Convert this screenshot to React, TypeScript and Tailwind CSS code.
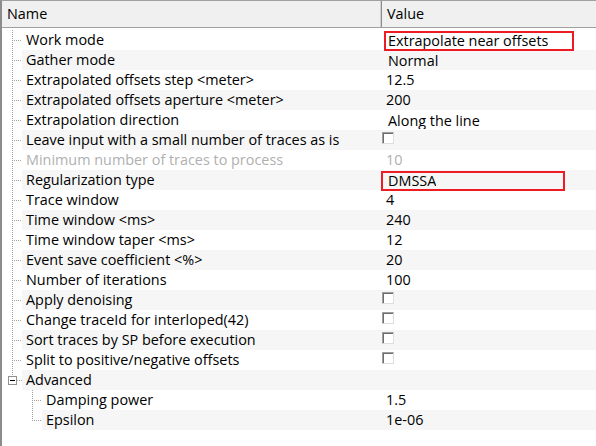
import * as React from "react"

// Property grid: tree of parameters with Name / Value columns

type Row = {
    name: string
    value?: string
    kind?: "text" | "combo" | "check" | "group"
    level?: 1 | 2
    disabled?: boolean
    mark?: "wide" | "narrow"
    last?: boolean
}

const ROWS: Row[] = [
    { name: "Work mode", value: "Extrapolate near offsets", kind: "combo", mark: "wide" },
    { name: "Gather mode", value: "Normal", kind: "combo" },
    { name: "Extrapolated offsets step <meter>", value: "12.5" },
    { name: "Extrapolated offsets aperture <meter>", value: "200" },
    { name: "Extrapolation direction", value: "Along the line", kind: "combo" },
    { name: "Leave input with a small number of traces as is", kind: "check" },
    { name: "Minimum number of traces to process", value: "10", disabled: true },
    { name: "Regularization type", value: "DMSSA", kind: "combo", mark: "narrow" },
    { name: "Trace window", value: "4" },
    { name: "Time window <ms>", value: "240" },
    { name: "Time window taper <ms>", value: "12" },
    { name: "Event save coefficient <%>", value: "20" },
    { name: "Number of iterations", value: "100" },
    { name: "Apply denoising", kind: "check" },
    { name: "Change traceId for interloped(42)", kind: "check" },
    { name: "Sort traces by SP before execution", kind: "check" },
    { name: "Split to positive/negative offsets", kind: "check" },
    { name: "Advanced", kind: "group" },
    { name: "Damping power", value: "1.5", level: 2 },
    { name: "Epsilon", value: "1e-06", level: 2, last: true },
]

const DOT = "#a0a0a0"

function TreeGutter({ row }: { row: Row }) {
    const level2 = row.level === 2
    const w = level2 ? 40 : 20
    return (
        <svg width={w} height={20} className="shrink-0" shapeRendering="crispEdges">
            {row.kind === "group" ? (
                <>
                    <line x1={10.5} y1={0} x2={10.5} y2={6} stroke={DOT} strokeDasharray="1 1" />
                    <rect x={6.5} y={6.5} width={8} height={8} fill="#fff" stroke="#919191" />
                    <line x1={8} y1={10.5} x2={13} y2={10.5} stroke="#000" />
                    <line x1={15} y1={10.5} x2={20} y2={10.5} stroke={DOT} strokeDasharray="1 1" />
                </>
            ) : level2 ? (
                <>
                    <line x1={30.5} y1={0} x2={30.5} y2={row.last ? 11 : 20} stroke={DOT} strokeDasharray="1 1" />
                    <line x1={32} y1={10.5} x2={40} y2={10.5} stroke={DOT} strokeDasharray="1 1" />
                </>
            ) : (
                <>
                    <line x1={10.5} y1={0} x2={10.5} y2={20} stroke={DOT} strokeDasharray="1 1" />
                    <line x1={12} y1={10.5} x2={20} y2={10.5} stroke={DOT} strokeDasharray="1 1" />
                </>
            )}
        </svg>
    )
}

function CheckBox() {
    return (
        <div className="mt-[2px] self-start w-[12px] h-[12px] bg-white border border-t-[#a0a0a0] border-l-[#a0a0a0] border-b-[#dedede] border-r-[#dedede] shadow-[inset_1px_1px_0_#6d6d6d]" />
    )
}

function PropertyRow({ row, index }: { row: Row; index: number }) {
    const shaded = index % 2 === 1
    const bg = shaded ? "bg-[#f6f6f6]" : "bg-white"
    const textColor = row.disabled ? "text-[#b0b0b0]" : "text-black"

    return (
        <div className="flex h-[20px]">
            {/* Name */}
            <div className="flex w-[380px] shrink-0">
                <TreeGutter row={row} />
                <div className={`flex-1 pl-[4px] leading-[20px] whitespace-nowrap overflow-hidden ${bg} ${textColor}`}>
                    {row.name}
                </div>
            </div>

            {/* Value */}
            <div className={`relative flex flex-1 items-start ${bg} ${textColor}`}>
                {row.kind === "check" && <CheckBox />}
                {row.kind === "combo" && (
                    <div className="h-[19px] overflow-hidden pl-[6px] leading-[21px] whitespace-nowrap">{row.value}</div>
                )}
                {(row.kind === undefined || row.kind === "text") && (
                    <div className="pl-[4px] leading-[20px] whitespace-nowrap">{row.value}</div>
                )}
                {row.mark === "wide" && (
                    <div className="absolute z-10 left-[2px] top-[1px] w-[190px] h-[20px] border-2 border-[#ed1c24]" />
                )}
                {row.mark === "narrow" && (
                    <div className="absolute z-10 -left-[1px] top-[1px] w-[184px] h-[20px] border-2 border-[#ed1c24]" />
                )}
            </div>
        </div>
    )
}

export default function App() {
    return (
        <div className="w-[596px] h-[446px] overflow-hidden bg-white border-l-2 border-l-[#8c8c8c] border-t border-t-[#a0a0a0] font-['Open_Sans',sans-serif] text-[14.4px] text-black">
            {/* Header */}
            <div className="flex h-[27px] bg-[#f0f0f0] border-b border-[#a0a0a0]">
                <div className="w-[379px] shrink-0 pl-[5px] flex items-center border-r border-[#d0d0d0]">Name</div>
                <div className="flex-1 pl-[5px] flex items-center border-l border-[#8c8c8c]">Value</div>
            </div>

            <div className="mt-[2px]">
                {ROWS.map((row, i) => (
                    <PropertyRow key={row.name} row={row} index={i} />
                ))}
            </div>
        </div>
    )
}
